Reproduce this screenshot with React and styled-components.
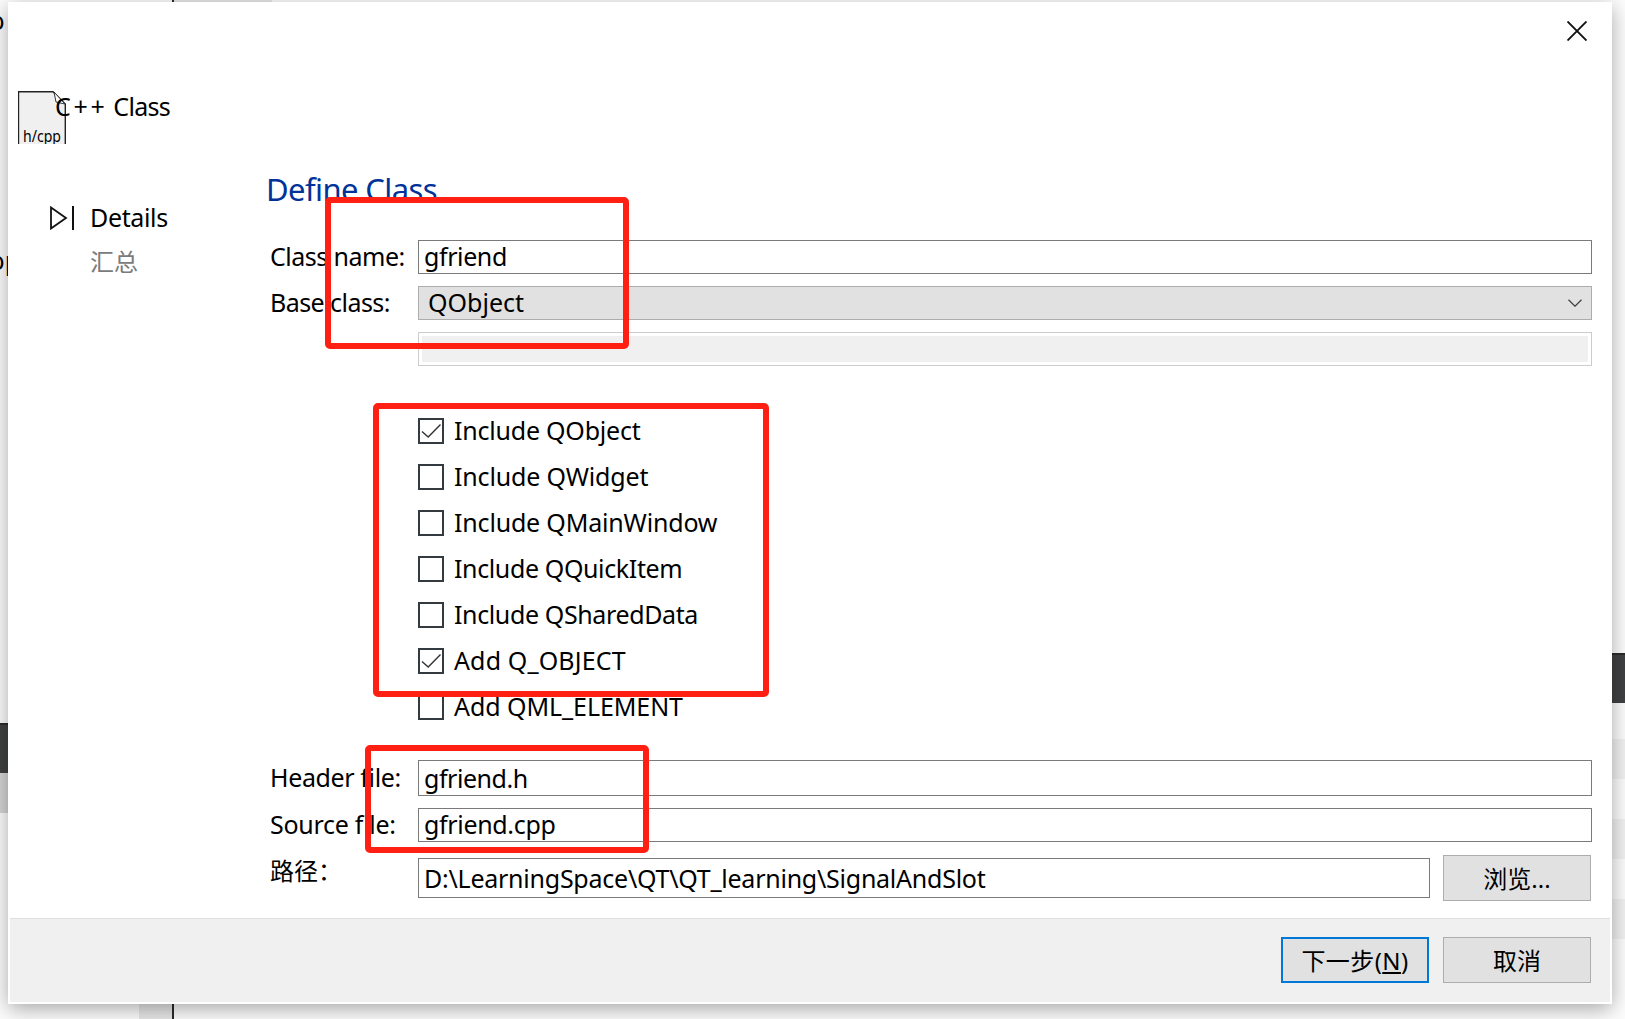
import React from "react";
import styled, { createGlobalStyle } from "styled-components";

const Global = createGlobalStyle`
  * { box-sizing: border-box; }
  body { margin: 0; background: #fff; overflow: hidden; }
`;

const Desktop = styled.div`
  position: relative;
  width: 1625px;
  height: 1019px;
  display: grid;
  grid-template-columns: 8px 1604px 13px;
  grid-template-rows: 2px 1002px 15px;
  overflow: hidden;
  background: #fdfdfd;
  color: #000;
  font: 25px/34px "Noto Sans", "Noto Sans CJK SC", sans-serif;
`;

const SideStrip = styled.div`
  grid-row: 1 / 4;
  grid-column: ${(p) => p.$col};
  display: flex;
  flex-direction: column;
`;

const Band = styled.div`
  flex: none;
  height: ${(p) => p.$h}px;
  background: ${(p) => p.$c || "transparent"};
  border-top: ${(p) => (p.$edge ? "2px solid #2b2b2b" : "0")};
  display: flex;
  align-items: center;
  overflow: hidden;
`;

const EdgeStrip = styled.div`
  grid-column: 2;
  grid-row: ${(p) => p.$row};
  display: flex;
`;

const Cell = styled.div`
  flex: none;
  width: ${(p) => p.$w}px;
  background: ${(p) => p.$c || "transparent"};
`;

const Dialog = styled.main`
  grid-column: 2;
  grid-row: 2;
  z-index: 1;
  display: flex;
  flex-direction: column;
  padding: 0 2px 2px;
  background: #fff;
  box-shadow: 0 5px 20px rgba(0, 0, 0, 0.34);
`;

const TitleBar = styled.header`
  height: 86px;
  display: flex;
  justify-content: flex-end;
  padding: 19px 23px 0 0;
`;

const Columns = styled.div`
  flex: 1;
  display: grid;
  grid-template-columns: 258px 1fr;
`;

const Sidebar = styled.aside`
  display: flex;
  flex-direction: column;
`;

const WizardName = styled.div`
  height: 108px;
  padding-left: 8px;
  display: flex;
  align-items: flex-start;
`;

const FileIcon = styled.svg`
  flex: none;
  margin-top: 3px;
  margin-right: -11px;
  font: 16px "Noto Sans", sans-serif;
`;

const Step = styled.div`
  display: flex;
  align-items: center;
  height: 44px;
  padding-left: 39px;
  color: ${(p) => (p.$dim ? "#7b7b7b" : "#000")};
`;

const StepMark = styled.div`
  width: 41px;
  display: flex;
`;

const Page = styled.section`
  display: flex;
  flex-direction: column;
  padding-top: 80px;
`;

const Title = styled.h1`
  margin: 0 0 0 -2px;
  height: 72px;
  font-size: 31px;
  line-height: 42px;
  letter-spacing: -0.6px;
  font-weight: 400;
  color: #003399;
`;

const Row = styled.div`
  display: grid;
  grid-template-columns: 150px 1fr;
  height: ${(p) => p.$h}px;
  margin-bottom: ${(p) => p.$gap}px;
  padding-right: 18px;
`;

const Text = styled.span`
  white-space: pre;
  line-height: 34px;
  letter-spacing: ${(p) => p.$ls || 0}px;
  margin-top: ${(p) => p.$mt ?? -2}px;
`;

const CjkText = styled(Text)`
  font-size: 24px;
`;

const Label = styled(Text)`
  padding-left: 2px;
  margin-top: ${(p) => p.$mt ?? -1}px;
`;

const CjkLabel = styled(Label)`
  font-size: 24px;
`;

const ClippedText = styled(Text)`
  margin-left: -10.5px;
`;

const Input = styled.div`
  height: ${(p) => p.$h}px;
  border: 1px solid #7a7a7a;
  background: #fff;
  display: flex;
  align-items: center;
  padding-left: 5px;
`;

const PathInput = styled(Input)`
  flex: 1;
`;

const Combo = styled(Input)`
  border-color: #adadad;
  background: #e1e1e1;
  padding: 0 9px 0 9px;
  justify-content: space-between;
`;

const DisabledInput = styled(Input)`
  border-color: #cccccc;
  padding: 3px;
`;

const DisabledFill = styled.div`
  flex: 1;
  align-self: stretch;
  background: #f0f0f0;
`;

const Checks = styled.div`
  display: flex;
  flex-direction: column;
  padding: 42px 0 0 150px;
  height: 394px;
`;

const CheckRow = styled.label`
  display: flex;
  align-items: center;
  height: 46px;
  gap: 10px;
`;

const Box = styled.span`
  width: 26px;
  height: 26px;
  border: 2px solid #333a40;
  display: flex;
`;

const PathLine = styled.div`
  display: flex;
  align-items: center;
  gap: 13px;
  height: 46px;
  margin-right: 1px;
`;

const Button = styled.button`
  flex: none;
  width: 148px;
  height: 46px;
  padding: 0;
  font: inherit;
  color: #000;
  border: ${(p) => (p.$primary ? "2px solid #0078d7" : "1px solid #adadad")};
  background: #e1e1e1;
`;

const Footer = styled.footer`
  height: 84px;
  border-top: 1px solid #dfdfdf;
  background: #f0f0f0;
  display: flex;
  justify-content: flex-end;
  gap: 14px;
  padding: 18px 19px 0 0;
`;

const Mark = styled.div`
  position: absolute;
  z-index: 2;
  left: ${(p) => p.$x}px;
  top: ${(p) => p.$y}px;
  width: ${(p) => p.$w}px;
  height: ${(p) => p.$h}px;
  border: 6px solid #ff2013;
  border-radius: 5px;
`;

const options = [
  { text: "Include QObject", on: true, ls: -0.22 },
  { text: "Include QWidget", ls: -0.16 },
  { text: "Include QMainWindow", ls: -0.18 },
  { text: "Include QQuickItem", ls: -0.38 },
  { text: "Include QSharedData", ls: -0.38 },
  { text: "Add Q_OBJECT", on: true, ls: 0.14 },
  { text: "Add QML_ELEMENT", ls: -0.07 },
];

export default function App() {
  return (
    <Desktop>
      <Global />
      <SideStrip $col={1}>
        <Band $h={42}><ClippedText>o</ClippedText></Band>
        <Band $h={202} />
        <Band $h={34}><ClippedText>op</ClippedText></Band>
        <Band $h={445} />
        <Band $h={50} $c="#404142" $edge />
        <Band $h={40} $c="#d6d6d6" />
      </SideStrip>
      <EdgeStrip $row={1}>
        <Cell $w={164} />
        <Cell $w={2} $c="#2b2b2b" />
        <Cell $w={98} $c="#e8e8e8" />
      </EdgeStrip>
      <EdgeStrip $row={3}>
        <Cell $w={131} />
        <Cell $w={33} $c="#e8e8e8" />
        <Cell $w={2} $c="#2b2b2b" />
      </EdgeStrip>
      <SideStrip $col={3}>
        <Band $h={653} />
        <Band $h={50} $c="#404142" $edge />
        <Band $h={36} />
        <Band $h={40} $c="#f2f2f2" />
        <Band $h={40} />
        <Band $h={40} $c="#f2f2f2" />
        <Band $h={40} />
        <Band $h={40} $c="#f2f2f2" />
      </SideStrip>
      <Dialog>
        <TitleBar>
          <svg width="20" height="20" viewBox="0 0 20 20">
            <path d="M0.5 0.5L19.5 19.5M19.5 0.5L0.5 19.5" stroke="#111" strokeWidth="1.9" />
          </svg>
        </TitleBar>
        <Columns>
          <Sidebar>
            <WizardName>
              <FileIcon width="48" height="53" viewBox="0 0 48 53">
                <path d="M0.5 53V0.7H35L47.3 13V53" fill="#f0f0f0" stroke="#222" strokeWidth="1.4" />
                <path d="M36 1L38 11L47 13Z" fill="#fff" stroke="#333" strokeWidth="1" />
                <text x="5" y="51" textLength="38" lengthAdjust="spacingAndGlyphs">h/cpp</text>
              </FileIcon>
              <Text $mt={1} $ls={-0.7}>
                <Text $ls={2.7}>C++</Text> Class
              </Text>
            </WizardName>
            <Step>
              <StepMark>
                <svg width="26" height="24" viewBox="0 0 26 24">
                  <path d="M2 1.5V22.5L17 12Z" fill="none" stroke="#111" strokeWidth="1.8" />
                  <path d="M24 0V24" stroke="#111" strokeWidth="2" />
                </svg>
              </StepMark>
              <Text $ls={-0.36}>Details</Text>
            </Step>
            <Step $dim>
              <StepMark />
              <CjkText $mt={0}>汇总</CjkText>
            </Step>
          </Sidebar>
          <Page>
            <Title>Define Class</Title>
            <Row $h={34} $gap={12}>
              <Label $ls={-0.52}>Class name:</Label>
              <Input $h={34}><Text $ls={-0.4}>gfriend</Text></Input>
            </Row>
            <Row $h={34} $gap={12}>
              <Label $ls={-0.55}>Base class:</Label>
              <Combo $h={34}>
                <Text>QObject</Text>
                <svg width="14" height="8" viewBox="0 0 14 8">
                  <path d="M0.5 0.8L7 7.2L13.5 0.8" fill="none" stroke="#444" strokeWidth="1.3" />
                </svg>
              </Combo>
            </Row>
            <Row $h={34} $gap={0}>
              <span />
              <DisabledInput $h={34}><DisabledFill /></DisabledInput>
            </Row>
            <Checks>
              {options.map((o) => (
                <CheckRow key={o.text}>
                  <Box>
                    {o.on && (
                      <svg width="22" height="22" viewBox="0 0 22 22">
                        <path d="M2 11.5L8.2 17L20.5 4.5" fill="none" stroke="#333" strokeWidth="1.4" />
                      </svg>
                    )}
                  </Box>
                  <Text $ls={o.ls}>{o.text}</Text>
                </CheckRow>
              ))}
            </Checks>
            <Row $h={36} $gap={12}>
              <Label $mt={0} $ls={-0.37}>Header file:</Label>
              <Input $h={36}><Text $mt={0} $ls={-0.46}>gfriend.h</Text></Input>
            </Row>
            <Row $h={34} $gap={13}>
              <Label $ls={-0.27}>Source file:</Label>
              <Input $h={34}><Text $ls={-0.33}>gfriend.cpp</Text></Input>
            </Row>
            <Row $h={46} $gap={0}>
              <CjkLabel>路径：</CjkLabel>
              <PathLine>
                <PathInput $h={40}>
                  <Text $mt={0} $ls={-0.24}>{"D:\\LearningSpace\\QT\\QT_learning\\SignalAndSlot"}</Text>
                </PathInput>
                <Button><CjkText>浏览...</CjkText></Button>
              </PathLine>
            </Row>
          </Page>
        </Columns>
        <Footer>
          <Button $primary><CjkText $ls={0.4}>下一步(<u>N</u>)</CjkText></Button>
          <Button><CjkText>取消</CjkText></Button>
        </Footer>
      </Dialog>
      <Mark $x={325} $y={197} $w={304} $h={152} />
      <Mark $x={373} $y={403} $w={396} $h={294} />
      <Mark $x={365} $y={745} $w={284} $h={108} />
    </Desktop>
  );
}
